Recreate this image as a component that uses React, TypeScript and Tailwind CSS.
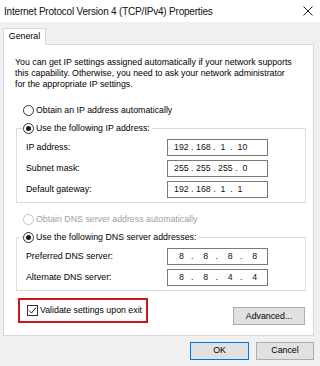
import React from 'react';

const body = { fontFamily: '"Liberation Sans", Arial, sans-serif' };

function Radio({ checked, disabled }: { checked?: boolean; disabled?: boolean }) {
  return (
    <span
      className={`w-[11px] h-[11px] rounded-full border bg-white flex items-center justify-center shrink-0 ${
        disabled ? 'border-[#c4c4c4]' : 'border-[#333333]'
      }`}
    >
      {checked && <span className="w-[5px] h-[5px] rounded-full bg-[#1a1a1a]" />}
    </span>
  );
}

function IpBox({ value }: { value: string }) {
  return (
    <div className="w-[101px] h-[17px] border border-[#7a7a7a] bg-white pl-[6px] flex items-center whitespace-pre text-[8.8px] text-[#111]">
      {value}
    </div>
  );
}

function Row({ label, value }: { label: string; value: string }) {
  return (
    <div className="flex items-center h-[17px]">
      <span className="w-[141px]">{label}</span>
      <IpBox value={value} />
    </div>
  );
}

export default function App() {
  return (
    <div className="w-[320px] h-[366px] bg-[#f0f0f0] flex flex-col overflow-hidden text-black" style={body}>
      {/* Title bar */}
      <div className="h-[22px] bg-white flex items-center justify-between pl-[4px] pr-[6px] shrink-0">
        <span className="text-[10px] tracking-[-0.2px] text-[#111]">Internet Protocol Version 4 (TCP/IPv4) Properties</span>
        <svg width="10" height="10" viewBox="0 0 10 10" className="mr-[1px]">
          <path d="M0.5 0.5 L9.5 9.5 M9.5 0.5 L0.5 9.5" stroke="#222" strokeWidth="1" />
        </svg>
      </div>

      {/* Tab */}
      <div className="mt-[6px] ml-[3px] w-[43px] h-[17px] bg-white border border-b-0 border-[#d9d9d9] -mb-px relative z-10 flex items-center justify-center text-[8.8px]">
        General
      </div>

      {/* Panel */}
      <div className="ml-[3px] w-[311px] h-[292px] bg-white border border-[#d9d9d9] flex flex-col text-[8.8px] leading-[11px]">
        <p className="pl-[11px] pr-[8px] pt-[12px]">
          You can get IP settings assigned automatically if your network supports
          <br />
          this capability. Otherwise, you need to ask your network administrator
          <br />
          for the appropriate IP settings.
        </p>

        <label className="flex items-center gap-[2px] ml-[19px] mt-[14px] h-[13px]">
          <Radio />
          <span>Obtain an IP address automatically</span>
        </label>

        <fieldset className="ml-[12px] mr-[7px] mt-[5px] border border-[#dcdcdc] pl-[9px] pb-[4px]">
          <legend className="flex items-center gap-[2px] ml-[-3px] pr-[2px] h-[13px]">
            <Radio checked />
            <span>Use the following IP address:</span>
          </legend>
          <div className="flex flex-col gap-[4px] mt-[4px]">
            <Row label="IP address:" value="192 . 168 .  1  .  10" />
            <Row label="Subnet mask:" value="255 . 255 . 255 .  0" />
            <Row label="Default gateway:" value="192 . 168 .  1  .  1" />
          </div>
        </fieldset>

        <label className="flex items-center gap-[2px] ml-[19px] mt-[10px] h-[13px] text-[#a0a0a0]">
          <Radio disabled />
          <span>Obtain DNS server address automatically</span>
        </label>

        <fieldset className="ml-[12px] mr-[7px] mt-[5px] border border-[#dcdcdc] pl-[9px] pb-[4px]">
          <legend className="flex items-center gap-[2px] ml-[-3px] pr-[2px] h-[13px]">
            <Radio checked />
            <span>Use the following DNS server addresses:</span>
          </legend>
          <div className="flex flex-col gap-[4px] mt-[4px]">
            <Row label="Preferred DNS server:" value={'  8   .    8   .    8   .    8'} />
            <Row label="Alternate DNS server:" value={'  8   .    8   .    4   .    4'} />
          </div>
        </fieldset>

        <div className="flex items-start justify-between ml-[14px] mr-[8px] mt-[7px]">
          <div className="w-[130px] h-[25px] border-2 border-[#d0151d] flex items-center pl-[7px] gap-[2px]">
            <span className="w-[11px] h-[11px] border border-[#333] bg-white flex items-center justify-center shrink-0">
              <svg width="9" height="9" viewBox="0 0 9 9">
                <path d="M1 4.5 L3.5 7 L8 1.5" fill="none" stroke="#222" strokeWidth="1" />
              </svg>
            </span>
            <span>Validate settings upon exit</span>
          </div>
          <button className="mt-[9px] w-[72px] h-[18px] bg-[#e1e1e1] border border-[#adadad] flex items-center justify-center">
            Advanced...
          </button>
        </div>
      </div>

      {/* Bottom buttons */}
      <div className="flex justify-end gap-[7px] mt-[6px] pr-[6px] text-[8.8px]">
        <button className="w-[59px] h-[18px] bg-[#e1e1e1] border border-[#0078d7] flex items-center justify-center">OK</button>
        <button className="w-[58px] h-[18px] bg-[#e1e1e1] border border-[#adadad] flex items-center justify-center">Cancel</button>
      </div>
    </div>
  );
}
